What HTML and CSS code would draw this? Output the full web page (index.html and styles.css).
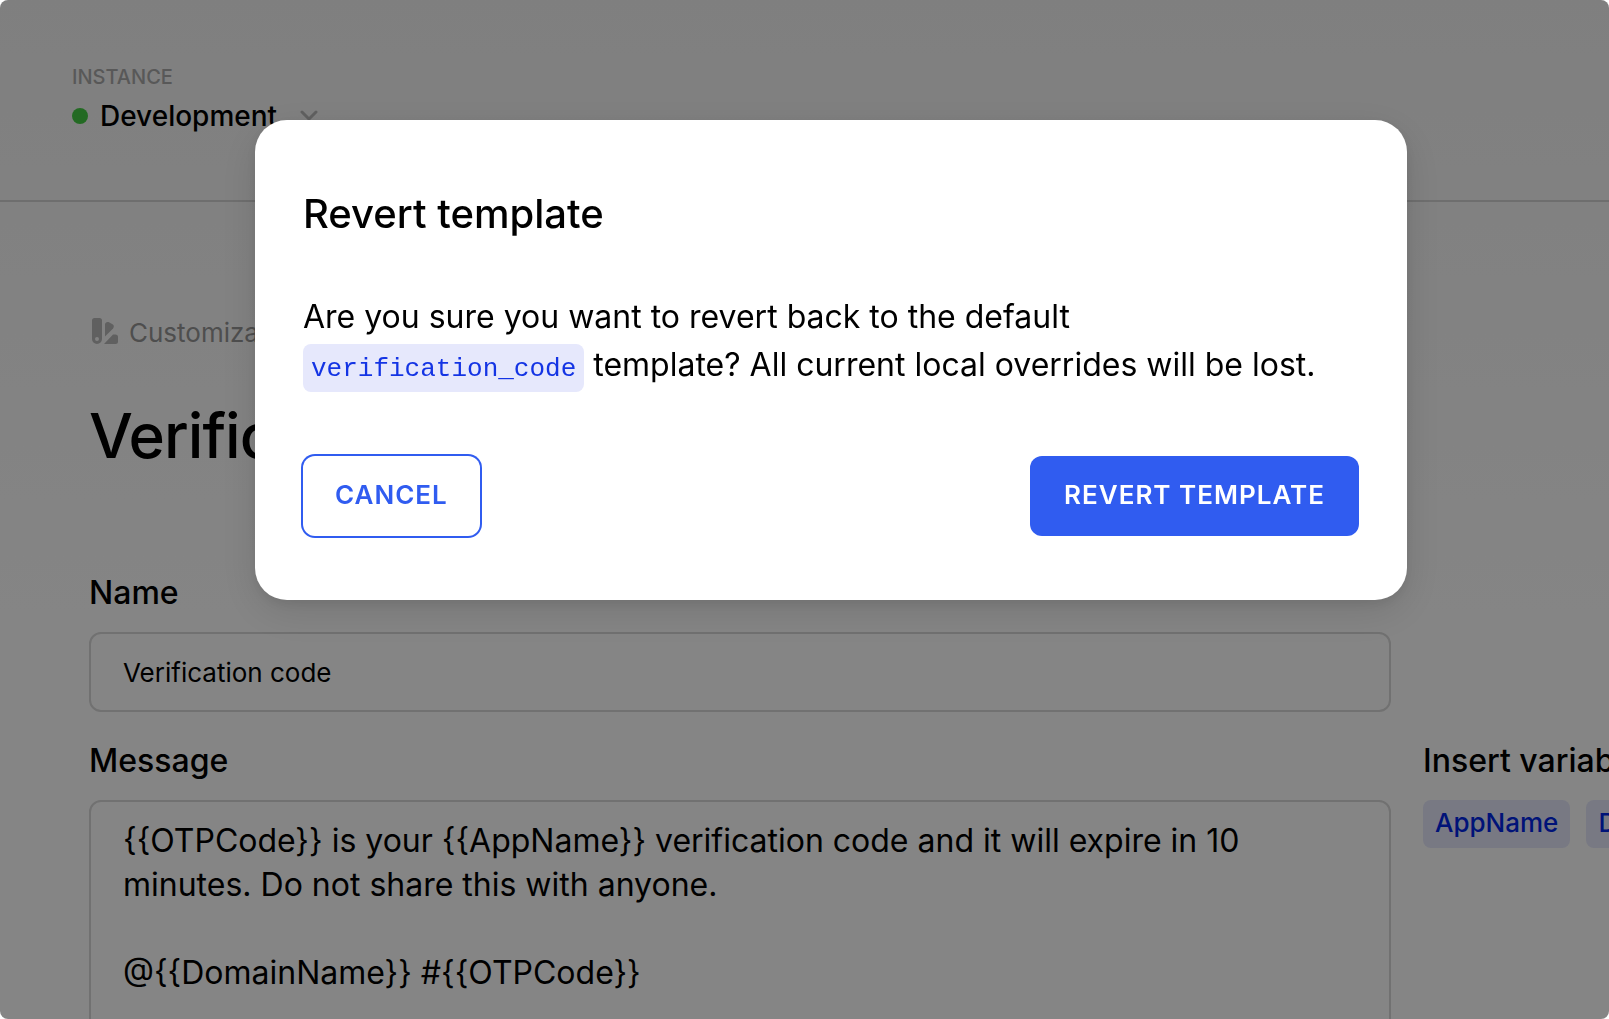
FILE: index.html
```html
<!DOCTYPE html>
<html lang="en">
<head>
<meta charset="utf-8">
<meta name="viewport" content="width=device-width, initial-scale=1">
<title>Verification code</title>
<link rel="stylesheet" href="styles.css">
</head>
<body>
<div class="app">
  <header class="topbar">
    <div class="topbar-label" id="instance-label">Instance</div>
    <button class="instance" type="button" aria-describedby="instance-label">
      <span class="instance-dot"></span>
      <span>Development</span>
      <svg class="instance-chevron" viewBox="0 0 18 12" aria-hidden="true"><path d="M2 2l7 7 7-7"/></svg>
    </button>
  </header>
  <main class="page">
    <a class="crumb" href="#">
      <svg class="crumb-icon" viewBox="0 0 26 26" aria-hidden="true"><path fill-rule="evenodd" d="M2.500 0h5a2.500 2.500 0 0 1 2.500 2.500V21a5 5 0 0 1-10 0V2.500A2.500 2.500 0 0 1 2.500 0zM5 19a2 2 0 1 0 0 4 2 2 0 0 0 0-4z"/><path d="M13 18.500V6.500c0-2 2-3 4-2.200l3.500 2c1.600 1 1.700 2.700.6 4.200z"/><path d="M12 26l9-9.500h2.500A2.500 2.500 0 0 1 26 19v4.500a2.500 2.500 0 0 1-2.500 2.500z"/></svg>
      <span>Customization</span>
    </a>
    <h1 class="title">Verification code</h1>
    <form class="form">
      <div class="field">
        <label class="label" for="name">Name</label>
        <input class="input" id="name" type="text" value="Verification code">
      </div>
      <div class="field field-message">
        <label class="label" for="message">Message</label>
        <textarea class="input textarea" id="message">{{OTPCode}} is your {{AppName}} verification code and it will expire in 10 minutes. Do not share this with anyone.

@{{DomainName}} #{{OTPCode}}</textarea>
      </div>
      <section class="variables">
        <h2 class="label">Insert variable</h2>
        <div class="chips">
          <button class="chip" type="button">AppName</button>
          <button class="chip" type="button">DomainName</button>
        </div>
      </section>
    </form>
  </main>
</div>
<div class="overlay">
  <div class="modal" role="dialog" aria-modal="true" aria-labelledby="modal-title">
    <h2 class="modal-title" id="modal-title">Revert template</h2>
    <p class="modal-text">Are you sure you want to revert back to the default <code class="code">verification_code</code> template? All current local overrides will be lost.</p>
    <div class="modal-actions">
      <button class="button button-outline" type="button">Cancel</button>
      <button class="button button-primary" type="button">Revert template</button>
    </div>
  </div>
</div>
</body>
</html>
```
FILE: styles.css
```css
* { box-sizing: border-box; }

html {
  height: 100%;
  background: #fff;
}

body {
  height: 100%;
  margin: 0;
  overflow: hidden;
  border-radius: 8px;
  font-family: Inter, "Liberation Sans", sans-serif;
  color: #000;
}

button, input, textarea { font: inherit; color: inherit; }

h1, h2, p { margin: 0; }

.app {
  height: 100%;
  overflow: hidden;
  background: linear-gradient(#f4f4f4, #fff 60%);
}

.topbar {
  padding: 64px 72px 66px;
  border-bottom: 2px solid #d4d4d4;
}

.topbar-label {
  font-size: 20px;
  font-weight: 500;
  line-height: 26px;
  text-transform: uppercase;
  color: #aaa;
}

.instance {
  display: flex;
  align-items: center;
  gap: 12px;
  margin-top: 8px;
  padding: 0;
  border: 0;
  background: none;
  font-size: 28px;
  font-weight: 500;
  line-height: 36px;
}

.instance-dot {
  width: 16px;
  height: 16px;
  border-radius: 50%;
  background: #43cc43;
}

.instance-chevron {
  width: 18px;
  height: 12px;
  margin-left: 11px;
  fill: none;
  stroke: #b8b8b8;
  stroke-width: 3;
  stroke-linecap: round;
  stroke-linejoin: round;
}

.page { padding: 113px 0 0 89px; }

.crumb {
  display: inline-flex;
  align-items: center;
  gap: 11px;
  padding-left: 3px;
  font-size: 26px;
  line-height: 36px;
  color: #969696;
  text-decoration: none;
}

.crumb-icon {
  width: 26px;
  height: 26px;
  margin-bottom: 4px;
  fill: #b8b8b8;
}

.title {
  margin-top: 45px;
  font-size: 62px;
  font-weight: 500;
  line-height: 80px;
  letter-spacing: -1px;
}

.form {
  display: grid;
  grid-template-columns: minmax(0, 1fr) 186px;
  column-gap: 32px;
  row-gap: 28px;
  margin-top: 96px;
}

.field {
  display: flex;
  flex-direction: column;
  gap: 18px;
}

.field-message { grid-row: 2; }

.label {
  font-size: 32px;
  font-weight: 500;
  line-height: 42px;
  white-space: nowrap;
}

.input {
  width: 100%;
  height: 80px;
  padding: 0 32px;
  border: 2px solid #d8d8d8;
  border-radius: 12px;
  background: none;
  font-size: 26px;
}

.textarea {
  height: 320px;
  padding: 17px 32px;
  font-size: 32px;
  line-height: 44px;
  resize: none;
}

.variables {
  display: flex;
  flex-direction: column;
  grid-row: 2;
  gap: 18px;
}

.chips {
  display: flex;
  gap: 16px;
}

.chip {
  flex: none;
  padding: 0 12px 2px;
  border: 0;
  border-radius: 8px;
  background: #e6e8fc;
  font-size: 26px;
  font-weight: 500;
  line-height: 46px;
  color: #0026e6;
}

.overlay {
  position: fixed;
  inset: 0;
  display: flex;
  align-items: flex-start;
  padding: 120px 202px 0 255px;
  border-radius: 8px;
  background: rgba(0, 0, 0, 0.48);
}

.modal {
  flex: 1;
  padding: 68px 48px 64px;
  border-radius: 32px;
  background: #fff;
  box-shadow: 0 12px 40px rgba(0, 0, 0, 0.12), 0 4px 12px rgba(0, 0, 0, 0.08);
}

.modal-title {
  font-size: 40px;
  font-weight: 500;
  line-height: 52px;
}

.modal-text {
  margin-top: 53px;
  padding-right: 16px;
  font-size: 32px;
  line-height: 48px;
}

.code {
  padding: 10px 8px 8px;
  border-radius: 8px;
  background: #e6e8fc;
  font-family: "Liberation Mono", monospace;
  font-size: 26px;
  line-height: 36px;
  color: #1434e4;
}

.modal-actions {
  display: flex;
  align-items: center;
  justify-content: space-between;
  margin-top: 67px;
}

.button {
  padding: 0 32px 2px;
  border: 0;
  border-radius: 12px;
  font-size: 26px;
  font-weight: 600;
  line-height: 78px;
  letter-spacing: 1px;
  text-transform: uppercase;
}

.button-outline {
  background: #fff;
  box-shadow: 0 0 0 2px #305cf0;
  color: #305cf0;
}

.button-primary {
  padding: 0 34px 2px;
  background: #305cf0;
  color: #fff;
}
```
